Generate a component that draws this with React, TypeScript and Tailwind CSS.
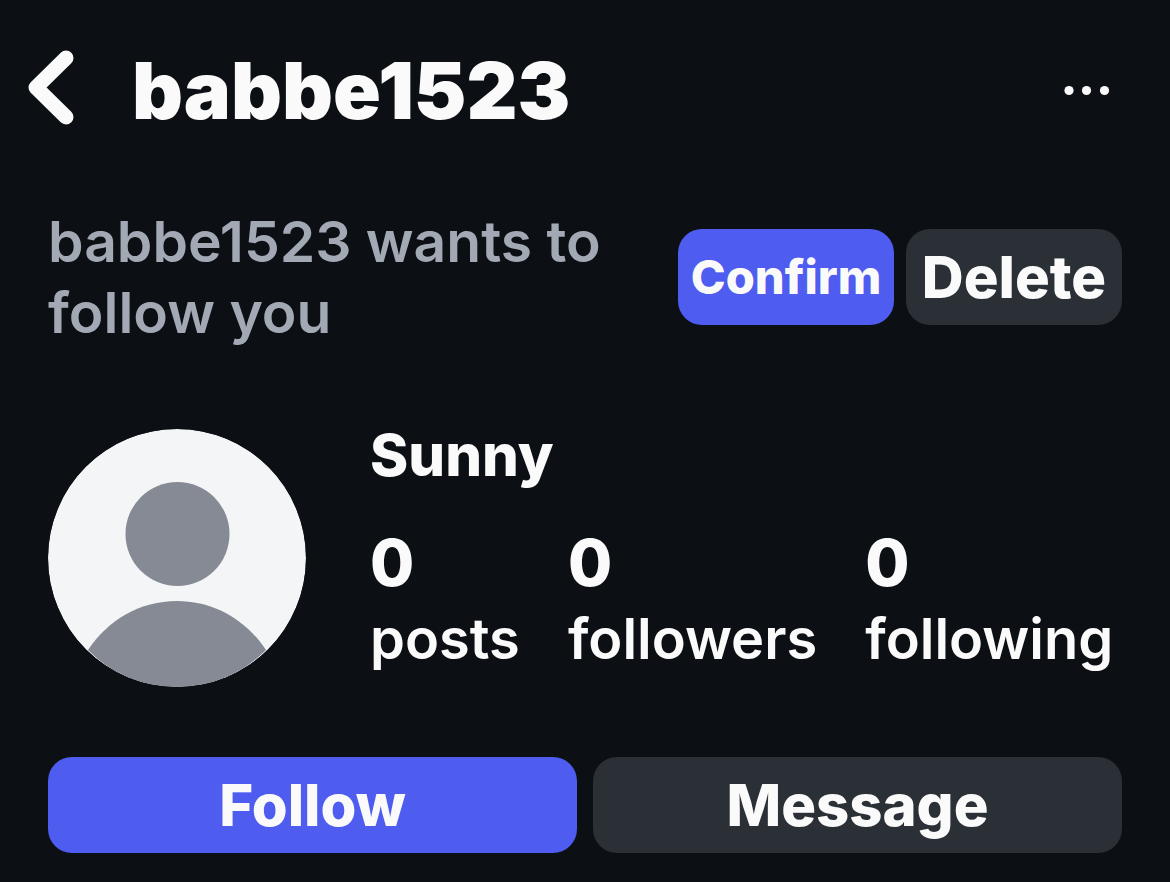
import React from "react";

type ActionButtonProps = { text: string; className: string };

function ActionButton({ text, className }: ActionButtonProps) {
  return (
    <button
      type="button"
      className={`flex h-24 items-center justify-center rounded-3xl font-extrabold ${className}`}
    >
      {text}
    </button>
  );
}

type StatProps = { count: number; label: string };

function Stat({ count, label }: StatProps) {
  return (
    <a href="#" className="block">
      <p className="text-[64px] leading-[76px] font-extrabold">{count}</p>
      <p className="text-[56px] leading-[76px] font-semibold">{label}</p>
    </a>
  );
}

function Header({ username }: { username: string }) {
  return (
    <header className="flex h-[180px] items-center pr-14 pl-6">
      <button type="button" aria-label="Back" className="mr-[54px]">
        <svg width="54" height="84" viewBox="0 0 54 84" fill="none">
          <path
            d="M42 10L12 39.5L42 69"
            stroke="currentColor"
            strokeWidth="15"
            strokeLinecap="round"
            strokeLinejoin="round"
          />
        </svg>
      </button>
      <h1 className="grow text-[79px] leading-[84px] font-black">{username}</h1>
      <button type="button" aria-label="Options">
        <svg width="56" height="24" viewBox="0 0 56 24" fill="currentColor">
          <circle cx="11" cy="12.5" r="4.6" />
          <circle cx="28.5" cy="12.5" r="4.6" />
          <circle cx="46.5" cy="12.5" r="4.6" />
        </svg>
      </button>
    </header>
  );
}

function Avatar() {
  return (
    <svg
      className="mt-2 mr-16 shrink-0 rounded-full"
      width="258"
      height="258"
      viewBox="0 0 258 258"
      role="img"
      aria-label="Profile picture"
    >
      <circle cx="129" cy="129" r="129" fill="#f3f5f7" />
      <circle cx="129.5" cy="105" r="52" fill="#858a94" />
      <path
        d="M40 221C60 191 92 172 129 172C166 172 198 191 218 221C194 245 164 258 129 258C94 258 64 245 40 221Z"
        fill="#858a94"
      />
    </svg>
  );
}

function App() {
  const stats = [
    { count: 0, label: "posts" },
    { count: 0, label: "followers" },
    { count: 0, label: "following" },
  ];

  return (
    <div className="min-h-screen bg-[#0c0f14] font-['Inter',sans-serif] text-[#fafafa]">
      <Header username="babbe1523" />
      <main className="px-12">
        <section className="flex items-center justify-between pt-[26px]">
          <p className="w-[600px] text-[57px] leading-[71px] font-semibold text-[#a2a9b4]">
            babbe1523 wants to follow you
          </p>
          <div className="flex gap-3">
            <ActionButton
              text="Confirm"
              className="w-[216px] bg-[#4f5cf0] text-[47px]"
            />
            <ActionButton
              text="Delete"
              className="w-[216px] bg-[#2b2f36] text-[58px]"
            />
          </div>
        </section>
        <section className="flex pt-[73px]">
          <Avatar />
          <div>
            <h2 className="text-[58px] leading-[68px] font-extrabold">Sunny</h2>
            <div className="mt-9 flex gap-12">
              {stats.map((stat) => (
                <Stat key={stat.label} count={stat.count} label={stat.label} />
              ))}
            </div>
          </div>
        </section>
        <section className="flex gap-4 pt-[70px]">
          <ActionButton
            text="Follow"
            className="flex-1 bg-[#4f5cf0] text-[58px]"
          />
          <ActionButton
            text="Message"
            className="flex-1 bg-[#2b2f36] text-[58px]"
          />
        </section>
      </main>
    </div>
  );
}

export default App;
